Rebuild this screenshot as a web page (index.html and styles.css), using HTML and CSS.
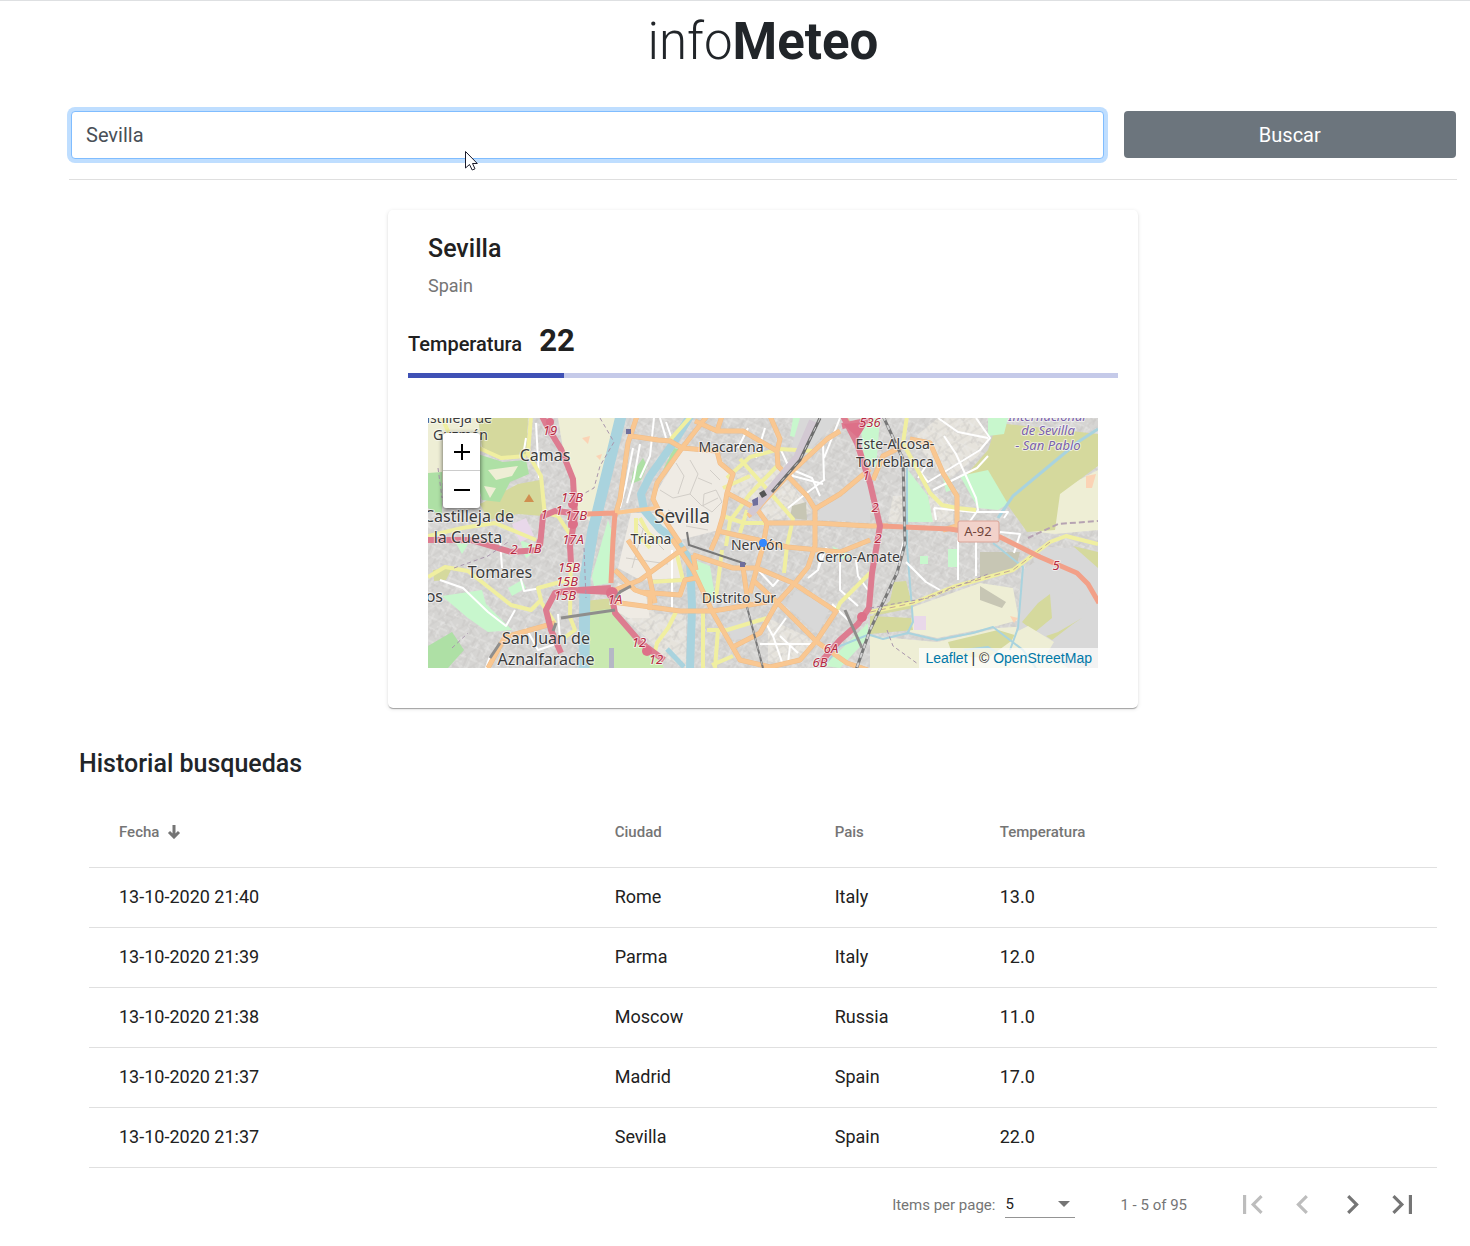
FILE: index.html
```html
<!DOCTYPE html>
<html lang="es">
<head>
<meta charset="utf-8">
<meta name="viewport" content="width=device-width, initial-scale=1">
<title>infoMeteo</title>
<link rel="stylesheet" href="styles.css">
</head>
<body>
<main class="page">
  <h1 class="brand">info<strong>Meteo</strong></h1>

  <form class="search">
    <input class="search-input" type="text" value="Sevilla" aria-label="Ciudad">
    <button class="search-button" type="button">Buscar</button>
  </form>

  <section class="card">
    <header class="card-header">
      <h2 class="card-title">Sevilla</h2>
      <p class="card-subtitle">Spain</p>
    </header>
    <p class="reading"><span class="reading-label">Temperatura</span><strong class="reading-value">22</strong></p>
    <div class="progress" role="progressbar" aria-label="Temperatura" aria-valuenow="22" aria-valuemin="0" aria-valuemax="100"><div class="progress-fill" style="width: 22%"></div></div>
    <div class="map">
      <svg class="map-canvas" viewBox="0 0 670 250" preserveAspectRatio="xMidYMid slice" role="img" aria-label="Mapa de Sevilla">
        <defs>
          <pattern id="streets" width="26" height="22" patternUnits="userSpaceOnUse" patternTransform="rotate(24)">
            <path d="M0 5H26M0 15H15M7 0V15M18 5V22M15 11H26" fill="none" stroke="#ebeae8" stroke-width="1"/>
            <path d="M3 5V15M12 15V22M22 0V5M18 18H26" fill="none" stroke="#c4c2c0" stroke-width="1"/>
          </pattern>
          <pattern id="lanes" width="17" height="19" patternUnits="userSpaceOnUse" patternTransform="rotate(-33)">
            <path d="M0 4H17M5 4V19M0 13H5M12 0V4M5 11H17" fill="none" stroke="#c4c2c0" stroke-width="1"/>
            <path d="M0 9H5M10 11V19" fill="none" stroke="#eee" stroke-width="1"/>
          </pattern>
        </defs>
        <rect width="670" height="250" fill="#d6d5d3"/>

        <g fill="#e6e3dc">
          <path d="M190 165L225 180L230 230L187 192Z"/>
          <path d="M212 195L258 197V250L230 235Z"/>
          <path d="M465 78L510 76L525 90V104L460 104Z"/>
          <path d="M483 22L510 0H550L561 22L550 38L520 62Z"/>
          <path d="M308 56L350 50L385 95L340 103L300 75Z"/>
          <path d="M340 200L390 224L372 240L340 247Z"/>
        </g>
        <rect width="670" height="250" fill="url(#streets)" opacity=".7"/>
        <path d="M0 0H670V250H0Z" fill="url(#lanes)" opacity=".5"/>
        <g fill="#efebe4">
          <path d="M254 32L289 35L303 56L297 78L291 112L252 122L229 95L226 78Z"/>
          <path d="M203 95L230 95L250 125L255 160L212 162L190 150Z"/>
          <path d="M190 165L218 178L222 200L200 200L187 192Z"/>
        </g>
        <path d="M232 72L245 80L262 76L274 88L290 80M248 45L256 58L250 76M262 42L270 56L262 76M276 76L288 72L294 84L284 94L275 88ZM282 52L292 62M240 92L256 100M258 108L280 112M270 60L284 66M208 104L236 132M198 140L240 146M216 108L204 150" fill="none" stroke="#d2cec8"/>

        <g fill="#eeeed5">
          <path d="M130 0H190L164 105L148 92L146 60L135 31Z"/>
          <path d="M0 0H50L55 30L30 60L0 70Z"/>
          <path d="M485 189L552 165L585 170L591 202L565 209L509 220L482 214Z"/>
          <path d="M442 218L509 224L570 210L640 206L670 214V250H442Z"/>
          <path d="M632 72L670 52V112L627 116L600 113Z"/>
        </g>
        <g fill="#d5d99d">
          <path d="M50 0H100L98 38L72 40L54 29Z"/>
          <path d="M52 86L90 66L112 62L115 98L90 96L60 102Z"/>
          <path d="M569 5L670 16V48L632 76L627 112L599 114L579 86L539 56L560 32Z"/>
          <path d="M466 164L478 163L485 190L444 198L462 183Z"/>
          <path d="M442 198L483 200L485 212L442 216Z"/>
          <path d="M520 224L570 212L590 218L560 240L525 238Z"/>
          <path d="M157 183L185 180L182 194L157 195Z"/>
          <path d="M5 152L24 150L18 162L6 163Z"/>
        </g>
        <g fill="#aee0a5">
          <path d="M43 34L75 44L98 42L101 56L82 64L72 84L54 82Z"/>
          <path d="M0 55L14 54V98L0 90Z"/>
          <path d="M205 54L215 40L219 48L213 62L203 66Z"/>
          <path d="M0 228L24 214L36 232L20 250H0Z"/>
          <path d="M246 30L254 32L235 52Z"/>
        </g>
        <path d="M60 52L90 48L84 58L68 62ZM56 68L68 70L62 80Z" fill="#eeeed5"/>
        <g fill="#c8f7cd">
          <path d="M14 178L54 172L58 186L76 204L84 212L60 214L40 200Z"/>
          <path d="M180 102L164 158L166 168L182 165L186 120Z"/>
          <path d="M480 52L500 78L505 104H480Z"/>
          <path d="M532 58L560 52L580 86L570 92L550 90Z"/>
          <path d="M262 140L282 148L288 184L276 182Z"/>
          <path d="M432 0H452L448 50L436 40Z"/>
          <path d="M365 0H374L370 20L362 18Z"/>
          <path d="M396 248L440 205V220L412 250Z"/>
          <path d="M520 131H530V149H520ZM492 138H500V146H492ZM515 60L521 58L524 72L518 74ZM404 128L425 138L412 142ZM92 122L112 130L98 140ZM28 125L40 126L34 136ZM80 170L94 162L98 170L84 178Z"/>
          <path d="M560 0H580L576 16L560 18Z"/>
        </g>
        <g fill="#d8d8d8">
          <path d="M392 90L414 78L442 52V104L390 102Z"/>
          <path d="M368 172L402 190L390 216L358 188Z"/>
          <path d="M594 152L622 135L670 176V205L640 206L620 200L624 172L597 192Z"/>
          <path d="M372 0H412L370 44L362 34Z"/>
          <path d="M298 206L322 200L324 220L304 222Z"/>
          <path d="M604 128L670 132V184L640 158L606 144Z"/>
          <path d="M594 152L615 150L640 172L670 195V250H640L600 222L588 214Z"/>
        </g>
        <path d="M610 185L622 176L624 200L607 214L594 204ZM630 214L654 200L645 206L624 222L618 218ZM645 128L670 134V150Z" fill="#d5d99d"/>
        <path d="M588 214L600 208L626 224L610 250H570Z" fill="#eeeed5"/>
        <g fill="#c7c6b4"><path d="M364 88L378 84L379 102L362 100ZM552 134H592L588 150L552 162ZM552 168L578 184L574 190L552 182Z"/></g>
        <g fill="#e9d8ea"><path d="M84 106L98 100L106 118L92 124ZM486 198H498V212H486Z"/></g>
        <g fill="#fbd3b5"><path d="M154 20L162 18L160 26ZM168 38L174 36L172 42ZM658 58L668 56L664 70L658 70ZM582 198L590 200L586 205Z"/></g>
        <path d="M157 194L187 190L213 223L230 237L236 250H158Z" fill="#c9e9b0"/>
        <path d="M181 230H186V250H181Z" fill="#b5b7c6"/>

        <g class="water">
          <path stroke-width="11" d="M193 -2L165 112L157 160L156 250"/>
          <path stroke-width="8" d="M263 -3L244 27L222 58L213 76L216 92L232 111L247 122L262 142L264 189L262 252"/>
          <path stroke-width="5" d="M239 231L256 249"/>
          <path stroke-width="2" d="M479 46V128L485 204L479 216"/>
          <path stroke-width="3" d="M670 11L650 24L585 78L570 100"/>
          <path stroke-width="2" d="M565 125L595 149L590 210L582 232M442 217L455 221L480 215L509 222L545 215L565 209L595 232L608 250M536 232L560 229L575 238M396 248L412 228L442 216"/>
        </g>

        <g class="street">
          <path d="M205 30L198 66L192 90M212 26L206 60L199 85M226 0L222 38L212 60M232 0L238 20"/>
          <path d="M108 5L111 60M98 20L96 32M12 162L35 170L60 194L78 208L87 192M72 122L74 150M92 158L96 173L113 170M98 210L110 232L128 226M58 250L62 238M130 196L132 220"/>
          <path d="M352 30L365 58L395 66M395 26L396 62L380 74L360 90M360 50L384 60L392 78M412 0L396 40M337 10L328 40M320 10L310 30M244 132V190M238 4L245 24"/>
          <path d="M335 200L345 218L355 247M358 200L345 218M332 226L390 226M352 218L370 235M362 228L360 245M394 130L390 152L380 160M390 152L398 130L408 137M412 140V172L430 188M428 142L430 158L440 172M330 152L345 168L352 160M404 186L420 202"/>
          <path d="M482 42L500 64L552 32L562 20L548 0M505 72L549 50L560 38M516 18L528 36L548 80L550 92L540 106M510 0L530 14L560 20M506 90L545 94L580 94L576 100M506 90L508 102M572 114L592 116L586 135M530 112V162M548 124V158M500 45L490 60M476 122L470 148M478 144L498 164L512 172M442 160L450 138"/>
        </g>

        <g class="secondary">
          <path d="M103 -2L100 36L113 58L117 98M53 31L73 40L98 38M14 0L24 22L53 31M0 118L34 110L67 105L108 122M122 96L130 98L143 118"/>
          <path d="M0 159L17 149L40 153L83 187L103 192L113 182L110 170L140 162M113 184L127 205M143 132L142 199L147 212L136 220"/>
          <path d="M263 -2L242 22M212 100L220 115L232 125M299 60L322 39L352 31L385 33M312 41L338 70L365 101L359 128L356 155M295 70L322 58M349 48L322 76L302 103L298 128M295 98L316 105L339 105M319 92L312 115"/>
          <path d="M275 192V250M279 212H299L339 200M290 212L287 250M249 192L240 210L229 225L226 238M442 155L412 185L409 192M249 137L255 162L222 164M294 132L288 180M284 247L305 238"/>
          <path d="M479 -2L475 25L502 75L514 87L529 90M529 90L548 92M208 100V115L222 130"/>
          <path d="M442 194L485 185L525 169L585 152L622 124L638 118L670 126"/>
        </g>
        <path d="M442 194L485 185L525 169L585 152L622 124" fill="none" stroke="#c2a795" stroke-dasharray="6 4"/>

        <g class="primary-edge">
          <path d="M209 -2L200 25L192 81L187 98M203 18L230 22L242 23L254 30L289 33L292 45L305 56L299 75L295 98L289 118L283 132M279 -2L254 30L229 65L225 81L232 95L252 125"/>
          <path d="M267 3L289 13L315 13L349 33L350 48L379 78L387 91V128L380 149L367 165L349 185L332 215L305 229M294 -2L289 13M342 -2L352 21L349 33M412 13L399 21L359 58L329 91L320 98M299 75L329 91L339 105L335 128L322 175M339 105L387 105L442 108L460 108M442 51L412 76L387 91M290 113L335 123L359 129L412 134L442 122"/>
          <path d="M187 152L207 172L227 179M185 184L230 190L252 193L285 193L339 184M200 122L220 152L227 185M212 162L249 135L258 130M187 172L212 162M212 174L252 177L257 162L268 160M244 121L265 152L285 195L312 242L342 249L372 242L389 222L409 192M265 137L305 150H329L365 165L409 194M325 162L352 187L389 224L419 245L440 252M315 149L320 185M265 137L268 152M222 176V192"/>
          <path d="M482 21L502 25L515 55L529 78V108L515 112M475 28L455 38L445 62M127 205L77 219L60 250M416 -2L424 12"/>
        </g>
        <g class="primary">
          <path d="M209 -2L200 25L192 81L187 98M203 18L230 22L242 23L254 30L289 33L292 45L305 56L299 75L295 98L289 118L283 132M279 -2L254 30L229 65L225 81L232 95L252 125"/>
          <path d="M267 3L289 13L315 13L349 33L350 48L379 78L387 91V128L380 149L367 165L349 185L332 215L305 229M294 -2L289 13M342 -2L352 21L349 33M412 13L399 21L359 58L329 91L320 98M299 75L329 91L339 105L335 128L322 175M339 105L387 105L442 108L460 108M442 51L412 76L387 91M290 113L335 123L359 129L412 134L442 122"/>
          <path d="M187 152L207 172L227 179M185 184L230 190L252 193L285 193L339 184M200 122L220 152L227 185M212 162L249 135L258 130M187 172L212 162M212 174L252 177L257 162L268 160M244 121L265 152L285 195L312 242L342 249L372 242L389 222L409 192M265 137L305 150H329L365 165L409 194M325 162L352 187L389 224L419 245L440 252M315 149L320 185M265 137L268 152M222 176V192"/>
          <path d="M482 21L502 25L515 55L529 78V108L515 112M475 28L455 38L445 62M127 205L77 219L60 250M416 -2L424 12"/>
        </g>
        <path d="M187 95L210 92L230 90" fill="none" stroke="#fbc78e" stroke-width="4"/>
        <path class="trunk" d="M158 96L187 95M187 95L185 122L183 165M453 108L522 111L572 119L612 139L649 155L660 166L671 185"/>

        <g class="motorway">
          <path d="M114 -2L120 10L133 31L145 61L147 98L142 128L143 145"/>
          <path d="M112 128L115 98L127 93L145 95L143 110M0 122L43 122L83 134L110 132L112 122"/>
          <path d="M133 235L123 212L118 192L127 175L143 172L183 174L187 195L213 225L236 242"/>
          <path d="M415 -2L429 25L442 65L452 108L444 155L441 190L430 206L412 222L392 245"/>
          <path d="M414 8L442 2M150 172L183 170"/>
        </g>
        <g fill="#dd7088"><circle cx="122" cy="4" r="4"/><circle cx="145" cy="86" r="5"/><circle cx="145" cy="106" r="5"/><circle cx="184" cy="175" r="6"/><circle cx="219" cy="233" r="5"/><path d="M415 6L440 4L430 20Z"/><circle cx="434" cy="199" r="5"/></g>

        <g fill="none">
          <path d="M385 3L369 40L322 96" stroke="#d3c9d3" stroke-width="8"/>
          <path d="M392 0L372 42L344 74" stroke="#6d6d6d" stroke-width="3"/>
          <path d="M392 0L372 42L344 74" stroke="#ccc" stroke-dasharray="5 5"/>
          <path d="M455 -2L475 41L477 126L469 155L442 212L428 252" stroke="#777" stroke-width="3"/>
          <path d="M455 -2L475 41L477 126L469 155L442 212L428 252" stroke="#d0d0d0" stroke-width="2" stroke-dasharray="5 5"/>
          <path d="M259 114L261 127L318 146M319 189L335 250" stroke="#777" stroke-width="2"/>
          <path d="M319 189L335 250" stroke="#bbb" stroke-dasharray="4 4"/>
          <path d="M188 180L192 174L203 168M133 200L187 192M125 213L128 205M62 240L72 225M417 192L434 230" stroke="#8f8e8c" stroke-width="3"/>
          <path d="M172 0L186 24L172 48L166 70L148 80M10 50L14 80M26 150L60 138L80 124M24 230L40 215M156 130L158 180M459 212L465 228L490 246M442 190L500 180L560 156" stroke="#a996ad" stroke-dasharray="4 3"/>
          <path d="M600 120L630 106L670 103" stroke="#b6a3b2" stroke-width="2" stroke-dasharray="6 3"/>
        </g>
        <g fill="#706f9c"><path d="M198 11H203V16H198ZM312 144H317V149H312ZM324 82L330 79V87L325 88Z"/><path d="M331 75L336 72L339 77L334 80Z" fill="#555"/></g>
        <path d="M101 76L106 84H96Z" fill="#d08f50"/>

        <g class="place small">
          <text x="64" y="5" text-anchor="end">Castilleja de</text>
          <text x="5" y="22" text-anchor="start">Guzmán</text>
          <text x="303" y="34">Macarena</text><text x="223" y="126">Triana</text>
          <text x="329" y="132">Nervión</text><text x="311" y="185">Distrito Sur</text>
          <text x="430" y="144">Cerro-Amate</text>
          <text x="467" y="31">Este-Alcosa-</text><text x="467" y="49">Torreblanca</text>
        </g>
        <g class="place">
          <text x="117" y="43">Camas</text><text x="86" y="104" text-anchor="end">Castilleja de</text>
          <text x="40" y="125">la Cuesta</text><text x="72" y="160">Tomares</text>
          <text x="15" y="184" text-anchor="end">os</text>
          <text x="118" y="226">San Juan de</text><text x="118" y="247">Aznalfarache</text>
        </g>
        <text class="place city" x="254" y="105">Sevilla</text>
        <g class="airport"><text x="619" y="3">Internacional</text><text x="620" y="17">de Sevilla</text><text x="620" y="32">- San Pablo</text></g>
        <g class="exit">
          <text x="122" y="17">19</text><text x="144" y="84">17B</text><text x="148" y="102">17B</text><text x="145" y="126">17A</text>
          <text x="116" y="101">1</text><text x="131" y="97">1</text><text x="86" y="136">2</text><text x="106" y="135">1B</text>
          <text x="141" y="154">15B</text><text x="139" y="168">15B</text><text x="137" y="182">15B</text><text x="187" y="186">1A</text>
          <text x="211" y="229">12</text><text x="228" y="246">12</text><text x="403" y="235">6A</text><text x="392" y="249">6B</text>
          <text x="447" y="94">2</text><text x="450" y="125">2</text><text x="438" y="62">1</text><text x="442" y="9">536</text><text x="628" y="152">5</text>
        </g>
        <rect x="530" y="103" width="41" height="21" rx="2" fill="#f2d2ca" stroke="#dba497"/>
        <text class="shield" x="550" y="118">A-92</text>
        <circle cx="335" cy="125" r="4" fill="#3388ff"/>
      </svg>
      <div class="zoom">
        <button class="zoom-button" type="button" aria-label="Acercar"><svg viewBox="0 0 16 16" width="16" height="16"><path d="M0 8H16M8 0V16"/></svg></button>
        <button class="zoom-button" type="button" aria-label="Alejar"><svg viewBox="0 0 16 16" width="16" height="16"><path d="M0 8H16"/></svg></button>
      </div>
      <p class="attribution"><a href="#leaflet">Leaflet</a> | © <a href="#osm">OpenStreetMap</a></p>
    </div>
  </section>

  <section class="history">
    <h2 class="history-title">Historial busquedas</h2>
    <table class="history-table">
      <thead>
        <tr>
          <th class="col-date" scope="col" aria-sort="descending"><button class="sort" type="button">Fecha<svg viewBox="0 0 14 14" width="14" height="14"><path d="M7 0V12M2 7L7 12L12 7"/></svg></button></th>
          <th class="col-city" scope="col">Ciudad</th>
          <th class="col-country" scope="col">Pais</th>
          <th scope="col">Temperatura</th>
        </tr>
      </thead>
      <tbody>
        <tr><td>13-10-2020 21:40</td><td>Rome</td><td>Italy</td><td>13.0</td></tr>
        <tr><td>13-10-2020 21:39</td><td>Parma</td><td>Italy</td><td>12.0</td></tr>
        <tr><td>13-10-2020 21:38</td><td>Moscow</td><td>Russia</td><td>11.0</td></tr>
        <tr><td>13-10-2020 21:37</td><td>Madrid</td><td>Spain</td><td>17.0</td></tr>
        <tr><td>13-10-2020 21:37</td><td>Sevilla</td><td>Spain</td><td>22.0</td></tr>
      </tbody>
    </table>
    <nav class="paginator" aria-label="Paginación">
      <label class="page-size">Items per page:
        <span class="select-box"><select class="select"><option>5</option><option>10</option><option>20</option></select></span>
      </label>
      <span class="range">1 - 5 of 95</span>
      <div class="pager">
        <button class="pager-button" type="button" aria-label="Primera página" disabled><svg viewBox="6 6 12 12" width="19" height="19"><path d="M18.41 16.59L13.82 12l4.59-4.59L17 6l-6 6 6 6zM6 6h2v12H6z"/></svg></button>
        <button class="pager-button" type="button" aria-label="Página anterior" disabled><svg viewBox="6 6 12 12" width="19" height="19"><path d="M15.41 7.41L14 6l-6 6 6 6 1.41-1.41L10.83 12z"/></svg></button>
        <button class="pager-button" type="button" aria-label="Página siguiente"><svg viewBox="6 6 12 12" width="19" height="19"><path d="M10 6L8.59 7.41 13.17 12l-4.58 4.59L10 18l6-6z"/></svg></button>
        <button class="pager-button" type="button" aria-label="Última página"><svg viewBox="6 6 12 12" width="19" height="19"><path d="M5.59 7.41L10.18 12l-4.59 4.59L7 18l6-6-6-6zM16 6h2v12h-2z"/></svg></button>
      </div>
    </nav>
  </section>
</main>
<svg class="pointer" viewBox="0 0 13 20" width="13" height="20" aria-hidden="true"><path d="M.5 .5V17L4.500 13.500L7.200 19L10 17.800L7.500 12.500H12.300Z"/></svg>
</body>
</html>
```

FILE: styles.css
```css
* {
  box-sizing: border-box;
}

body {
  margin: 0;
  border-top: 1px solid #dee0e2;
  background: #fff;
  color: #212529;
  font-family: Roboto, "Liberation Sans", sans-serif;
  font-size: 18px;
  line-height: 24px;
}

h1, h2, p {
  margin: 0;
}

button, input, select {
  font: inherit;
}

button {
  padding: 0;
  border: 0;
  background: none;
}

.page {
  padding: 10px 13px 0 69px;
}

.brand {
  font-size: 51px;
  line-height: 62px;
  font-weight: 300;
  text-align: center;
}

.brand strong {
  font-weight: 700;
}

.search {
  display: grid;
  grid-template-columns: minmax(0, 1fr) 24%;
  align-items: start;
  gap: 20px;
  margin-top: 36px;
  padding: 2px 1px 20px 2px;
  border-bottom: 1px solid #dfdfdf;
}

.search-input {
  width: 100%;
  height: 48px;
  padding: 0 14px;
  border: 1px solid #80bdff;
  border-radius: 4px;
  outline: 0;
  background: #fff;
  color: #495057;
  font-size: 20px;
  box-shadow: 0 0 0 4px #bfdeff;
}

.search-button {
  height: 47px;
  border-radius: 4px;
  background: #6c757d;
  color: #fff;
  font-size: 20px;
}

.card {
  max-width: 750px;
  margin: 30px auto 0;
  padding: 20px 20px 40px;
  border-radius: 5px;
  color: #212121;
  box-shadow: 0 2px 1px -1px rgba(0, 0, 0, .2), 0 1px 1px rgba(0, 0, 0, .14), 0 1px 4px rgba(0, 0, 0, .12);
}

.card-header {
  padding: 0 20px;
}

.card-title {
  font-size: 25px;
  line-height: 38px;
  font-weight: 500;
}

.card-subtitle {
  margin-top: 6px;
  color: #757575;
}

.reading {
  display: flex;
  align-items: baseline;
  gap: 17px;
  margin-top: 25px;
  font-size: 20px;
  line-height: 36px;
}

.reading-label {
  font-weight: 500;
}

.reading-value {
  font-size: 31px;
  font-weight: 700;
}

.progress {
  height: 5px;
  margin-top: 11px;
  background: #c5cae9;
}

.progress-fill {
  height: 100%;
  background: #3f51b5;
}

.map {
  position: relative;
  height: 250px;
  margin: 40px 20px 0;
  overflow: hidden;
}

.map-canvas {
  display: block;
  width: 100%;
  height: 100%;
}

.map-canvas text {
  font-family: "Noto Sans", sans-serif;
  text-anchor: middle;
  paint-order: stroke;
  stroke: rgba(255, 255, 255, .6);
  stroke-width: 2px;
  stroke-linejoin: round;
}

.map-canvas text[text-anchor="end"] {
  text-anchor: end;
}

.map-canvas text[text-anchor="start"] {
  text-anchor: start;
}

.place {
  fill: #3c3c3c;
  font-size: 16px;
}

.small {
  font-size: 14px;
}

.city {
  font-size: 19px;
}

.airport {
  fill: #7a61ac;
  font-size: 13px;
  font-style: italic;
}

.exit {
  fill: #b52a42;
  font-size: 13px;
  font-style: italic;
}

.map-canvas .shield {
  fill: #70453b;
  font-size: 13px;
  stroke: none;
}

.water, .street, .secondary, .primary, .primary-edge, .trunk, .motorway {
  fill: none;
  stroke-linejoin: round;
}

.water {
  stroke: #a9d3de;
}

.street {
  stroke: #fff;
  stroke-width: 2px;
}

.secondary {
  stroke: #f0efa0;
  stroke-width: 4px;
}

.primary-edge {
  stroke: #efbd8a;
  stroke-width: 5px;
}

.primary {
  stroke: #f9c791;
  stroke-width: 4px;
}

.trunk {
  stroke: #f2a088;
  stroke-width: 5px;
}

.motorway {
  stroke: #dd7c90;
  stroke-width: 6px;
}

.zoom {
  position: absolute;
  top: 15px;
  left: 15px;
  width: 37px;
  border-radius: 3px;
  background: #fff;
  box-shadow: 0 1px 5px rgba(0, 0, 0, .65);
}

.zoom-button {
  display: grid;
  place-items: center;
  width: 100%;
  height: 37px;
}

.zoom-button + .zoom-button {
  height: 38px;
  border-top: 1px solid #ccc;
}

.zoom-button path {
  stroke: #000;
  stroke-width: 2px;
}

.attribution {
  position: absolute;
  right: 0;
  bottom: 0;
  padding: 0 6px;
  background: rgba(255, 255, 255, .7);
  color: #333;
  font-family: "Liberation Sans", Arial, sans-serif;
  font-size: 14px;
  line-height: 20px;
}

.attribution a {
  color: #0078a8;
  text-decoration: none;
}

.history {
  padding: 41px 20px 0;
}

.history-title {
  margin-left: -10px;
  font-size: 25px;
  line-height: 30px;
  font-weight: 500;
}

.history-table {
  width: 100%;
  margin-top: 18px;
  border-collapse: collapse;
  table-layout: fixed;
  color: #212121;
}

.history-table th, .history-table td {
  height: 60px;
  padding: 0;
  border-bottom: 1px solid #e0e0e0;
  text-align: left;
}

.history-table th {
  height: 70px;
  color: #757575;
  font-size: 15px;
  font-weight: 500;
}

.history-table th:first-child, .history-table td:first-child {
  padding-left: 30px;
}

.col-date {
  width: 39%;
}

.col-city {
  width: 220px;
}

.col-country {
  width: 165px;
}

.sort {
  display: flex;
  align-items: center;
  gap: 8px;
  color: inherit;
}

.sort path {
  fill: none;
  stroke: #757575;
  stroke-width: 3px;
}

.paginator {
  display: flex;
  align-items: center;
  justify-content: flex-end;
  height: 74px;
  padding-right: 10px;
  color: #757575;
  font-size: 15px;
}

.page-size {
  display: flex;
  align-items: center;
  gap: 10px;
}

.select-box {
  position: relative;
  width: 70px;
  border-bottom: 1px solid #949494;
}

.select-box::after {
  content: "";
  position: absolute;
  top: 10px;
  right: 5px;
  border: 6px solid transparent;
  border-top-color: #757575;
  border-bottom: 0;
  pointer-events: none;
}

.select {
  width: 100%;
  height: 26px;
  padding: 0;
  border: 0;
  appearance: none;
  background: none;
  color: #212121;
}

.range {
  margin: 0 40px 0 45px;
}

.pager {
  display: flex;
}

.pager-button {
  display: grid;
  place-items: center;
  width: 50px;
  height: 50px;
}

.pager-button svg {
  overflow: visible;
  fill: #757575;
}

.pager-button:disabled svg {
  fill: #bdbdbd;
}

.pointer {
  position: absolute;
  top: 151px;
  left: 465px;
  fill: #fff;
  stroke: #1b1b2b;
}
```
